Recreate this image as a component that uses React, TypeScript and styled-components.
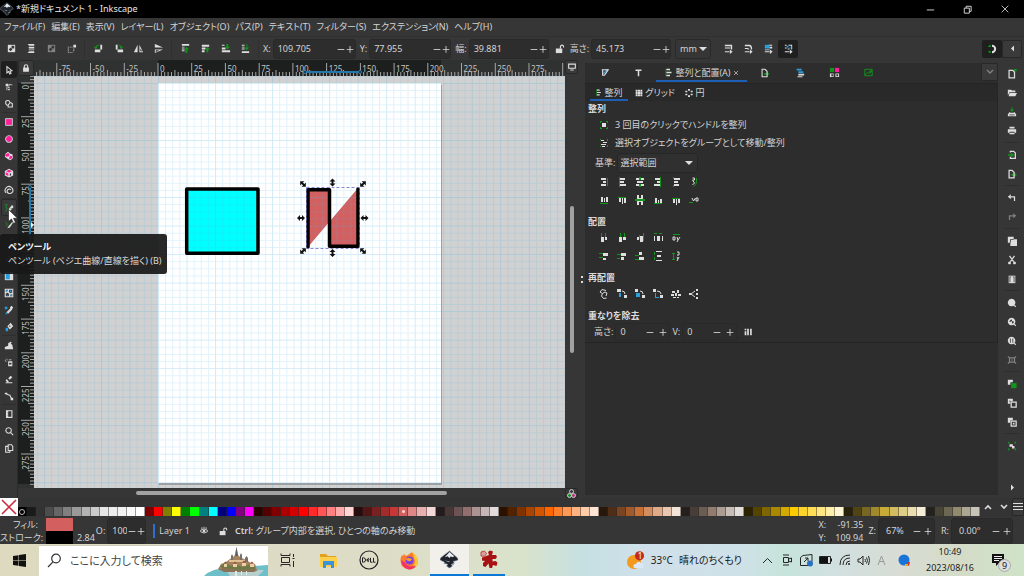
import React from 'react';
import styled, { createGlobalStyle, css } from 'styled-components';

const GlobalStyle = createGlobalStyle`
  * { box-sizing: border-box; }
  html, body { margin: 0; padding: 0; background: #363636; overflow: hidden; }
  body, button, input, select {
    font-family: "Noto Sans", "Noto Sans CJK JP", sans-serif;
    font-feature-settings: "palt";
    font-size: 9px;
    line-height: 14px;
    color: #d4d4d4;
  }
  button, input, select { margin: 0; padding: 0; border: 0; background: none; outline: 0; }
  svg { display: block; flex: none; }
`;

const light = '#dedede';
const green = '#12961a';
const blue = '#2a9fe0';
const pink = '#ff1f9a';

/* ---------- icons: 12x12 glyphs, one path per colour ---------- */

interface Glyph {
  w?: string; // light fill
  s?: string; // light stroke
  g?: string; // green fill
  gs?: string; // green stroke
  b?: string; // blue fill
  p?: string; // pink fill
  k?: string; // dark detail on top
}

const glyphs: Record<string, Glyph> = {
  selectAll: { w: 'M2 2h8v8h-8z', k: 'M6 3h3v3h-3zM3 7l2-2 2 2-2 2z' },
  selectLayers: { w: 'M3 1h6v2h-6zM3 4h6v2h-6zM3 7h6v1h-6zM3 9h6v2h-6zM2 1h1v1h-1zM2 10h1v1h-1z' },
  deselect: { w: 'M2 2h8v8h-8z', k: 'M6 3h3v3h-3zM3 7l2-2 2 2-2 2z' },
  selectTouch: { w: 'M2 4h1v1h-1zM4 4h1v1h-1zM6 4h1v1h-1zM2 6h1v1h-1zM2 8h1v1h-1zM2 10h1v1h-1zM4 10h1v1h-1zM6 10h1v1h-1zM8 6h1v1h-1zM8 8h1v1h-1zM8 2h3v3h-3z' },
  rotateLeft: { w: 'M2 7h6v3h-6zM8 2h2v5h-2z', gs: 'M3 6q0-4 4-4', g: 'M1 4h4l-2 3z' },
  rotateRight: { w: 'M5 7h6v3h-6zM3 2h2v5h-2z', gs: 'M6 2q3 0 3 3', g: 'M7 4h4l-2 3z' },
  flipH: { w: 'M5 2v8h-4zM7 2l4 8h-4z', k: 'M8 6l2 3h-2z' },
  flipV: { w: 'M2 1l9 4h-9zM2 7h9l-9 4z', k: 'M3 8h4l-4 2z' },
  raiseTop: { w: 'M2 1h8v2h-8zM2 4h3v1h-3zM2 6h3v1h-3zM2 8h3v1h-3z', g: 'M7 4l3 3h-2v4h-2v-4h-1z' },
  raise: { w: 'M2 2h8v2h-8zM2 5h4v2h-4zM2 8h3v2h-3z', g: 'M8 4l3 3h-2v3h-2v-3h-1z' },
  lower: { w: 'M2 8h9v2h-9zM2 5h4v2h-4zM2 2h3v1h-3z', g: 'M7 1h2v3h2l-3 3-3-3h2z' },
  lowerBottom: { w: 'M2 9h8v2h-8zM2 2h3v1h-3zM2 4h3v1h-3zM2 6h3v1h-3z', g: 'M7 1h1v4h2l-3 3-2-3h2z' },
  unlock: { w: 'M2 6h7v5h-7z', s: 'M7 6v-2a1.700 1.700 0 0 1 3.400 0v1' },
  lock: { w: 'M2.500 5.500h7v5h-7z', s: 'M4 6v-2a2 2 0 0 1 4 0v2' },
  scaleStroke: { w: 'M2 2h8v1.500h-8zM2 5h6v1h-6zM8.500 2h1.500v5h-1.500zM2 9h5v1h-5zM7.500 7l3 2.500-3 2.500z' },
  scaleCorner: { w: 'M2 2h5q3 0 3 5h-1.500q0-3.500-2-3.500h-4.500zM2 5.500h3q1.500 0 1.500 1.500h-1q0-.5-1-.5h-2.500zM2 9h5v1h-5zM7.500 7l3 2.500-3 2.500z' },
  scaleGradient: { b: 'M2 2h5v4h-5z', w: 'M6 2h4v1h-4zM7 4h3v2h-3zM2 9h5v1h-5zM7.500 7l3 2.500-3 2.500zM2 7h5v1h-5z' },
  scalePattern: { b: 'M4 3h2v2h-2zM7 5h2v1h-2z', w: 'M2 2h2v1h-2zM6 2h4v1h-4zM9 3h1v4h-1zM2 5h2v1h-2zM2 9h5v1h-5zM7.500 7l3 2.500-3 2.500zM5 6h2v1h-2z' },
  snap: { g: 'M1.500 2.500l3-1.500v2.500h-3zM1.500 8.500h3v2.500l-3-1.500z', w: 'M6 1a5 5 0 0 1 0 10v-2.400a2.600 2.600 0 0 0 0-5.200z' },
  arrow: { s: 'M3.500 2v7.500l2-1.500 1.500 2.800 1.500-.8-1.400-2.600 2.400-.6z' },
  nodes: { w: 'M2 2h3v3h-3zM4 5l3 1 0 1-2 0zM5 8h2v2h-2zM8 3h2v1h-2zM3 6h1v4h-1z', s: 'M5 4l3-1' },
  shapeBuilder: { s: 'M2 4.500a2.500 2.500 0 0 1 5-.5l3 1.500v4h-5v-2a3 3 0 0 1-3-3zM5 7l2-2' },
  rectTool: { w: 'M1.500 1.500h9v9h-9z', p: 'M2.500 2.500h7v7h-7z' },
  circleTool: { w: 'M6 1.500a4.500 4.500 0 1 0 .01 0z', p: 'M6 2.500a3.500 3.500 0 1 0 .01 0z' },
  starTool: { w: 'M5 1l2 2 3 1 1 4-3 3-3-1-4-3 1-4z', p: 'M5 2.500l1.500 1.500 0 2-3 1-2-1 1-2.500zM7 6l3 0 0 2-2 2-2-1z' },
  boxTool: { w: 'M6 1l5 2.500v5.500l-5 2.500-5-2.500v-5.500z', p: 'M6 2l3.500 2-3.500 1.500-3.500-1.500zM2 5l3.200 1.500v3l-3.200-1.500z', k: 'M7 7l1.500-.7v2.400l-1.500.8z' },
  spiralTool: { s: 'M2.500 9.500a4.600 4.600 0 1 1 7.400-.6q-1.500 1.600-3.600 1.200a2.600 2.600 0 1 1 2-4.300' },
  penTool: { gs: 'M1 2h3l-2 3 2 1-2 4', w: 'M6 7l3-4 2 0 0 2-3 4-3 1z', k: 'M8 6h1v1h-1z' },
  pencilTool: { gs: 'M2 2q3 3 1 5', w: 'M5 8l5-6 1 1-4 6-3 1z' },
  calligraphy: { gs: 'M2 10l7-7', w: 'M8 2h2v2h-2z' },
  textTool: { w: 'M5 2h2l3 8h-2l-2-6-2 6h-2z' },
  gradientTool: { w: 'M1 1h10v10h-10z', b: 'M2 2h5v8h-5z' },
  meshTool: { s: 'M1.500 1.500h9v9h-9zM2 6q2-2 4 0t4 0M6 2q-2 2 0 4t0 4', b: 'M2.500 2.500h2v2h-2zM7.500 7.500h2v2h-2zM7 3h2v2h-2zM3 8h2v1h-2z' },
  picker: { b: 'M1 2h3v3h-3zM2 9h2v2h-2z', s: 'M4 8.500l4-4 1 1-4 4z', w: 'M7 3l2-2 2 2-2 3z' },
  bucket: { b: 'M2 7h3v4h-3z', w: 'M4 5l4-4 3 4-4 4z', k: 'M7 4l1 1-1 1-1-1z' },
  tweak: { w: 'M1 11v-2.500l4-1.500 0-3 3-2 1.500 1-1.500 1 2 2 1 5z' },
  spray: { w: 'M5 5h5v6h-5zM6 3h3v1h-3zM2 2h1v1h-1zM2 5h1v1h-1zM4 3h1v1h-1zM1 3.500h1v1h-1z', k: 'M6 7h3v2h-3z' },
  eraser: { w: 'M5 5l3-3 2 2-3 3zM3 6l3 3-2 1-2-2zM2 10h8v1h-8z' },
  connector: { w: 'M1 2h3v2h-3zM8 8h3v3h-3z', s: 'M3 4l4 1 2 4' },
  measure: { s: 'M3 2h6.500v8h-6.500z', w: 'M3 2h2v8h-2z', k: 'M3 4h1v1h-1zM3 7h1v1h-1z' },
  zoomTool: { s: 'M5.500 2a3.300 3.300 0 1 0 .01 0zM8 8l3 3' },
  pagesTool: { s: 'M5 2h4l1.500 2v5h-5.500zM5 4h-3v7h5v-2' },
  strokePanel: { s: 'M3 3h7l-4 6h-2v-6', b: 'M5 6l4-4 1 1-4 4-2 1z' },
  textPanel: { w: 'M2 2h8v2h-3v7h-2v-7h-3z' },
  alignPanel: { w: 'M3 1h5v2h-5zM3 5h7v2h-7zM3 9h5v2h-5z', g: 'M2 1h1v10h-1z' },
  exportPanel: { s: 'M2.500 1.500h3.500l2.500 2.500v6.500h-6z', g: 'M5 6h3v-1.500l3.500 2.500-3.500 2.500v-1.500h-3z' },
  layersPanel: { b: 'M2 1h6v2h-6zM4 4h6v2h-6z', w: 'M4 7h7v2h-7zM3 10h6v1h-6z' },
  swatchPanel: { g: 'M1 1h4.500v4.500h-4.500z', p: 'M6.500 1h4.500v4.500h-4.500z', w: 'M1 7h4v4h-4zM7 7h4v4h-4z', k: 'M2.500 8h2v2h-2zM8 8h2v2h-2z' },
  imagePanel: { gs: 'M2 2.500h8v7h-8zM2 9l3-3 2 1 3-4', g: 'M7 4h2v2h-2z' },
  gridDots: { w: 'M1 1h3v3h-3zM4.500 1h3v3h-3zM8 1h3v3h-3zM1 4.500h3v3h-3zM4.500 4.500h3v3h-3zM8 4.500h3v3h-3zM1 8h3v3h-3zM4.500 8h3v3h-3zM8 8h3v3h-3z' },
  ring: { w: 'M4.500 0h3v2.500h-3zM4.500 9.500h3v2.500h-3zM.5 2.500h3v2.500h-3zM8.500 2.500h3v2.500h-3zM.5 7h3v2.500h-3zM8.500 7h3v2.500h-3z' },
  handleClick: { w: 'M4 4h4v4h-4z', g: 'M2 2h2v1h-1v1h-1zM8 2h2v2h-1v-1h-1zM2 8h1v1h1v1h-2zM9 8h1v2h-2v-1h1z' },
  moveGroup: { w: 'M3 3h3v1h-3zM5 5h4v1h-4zM3 7h5v1h-5zM4 9h3v1h-3z', g: 'M9 2h1v2h-1zM9 8h1v2h-1zM2 2h1v1h-1zM2 9h1v1h-1z' },
  aRightToLeft: { w: 'M3 2h5v2h-5zM5 5h3v2h-3zM3 8h5v2h-5z', g: 'M9 2h1v8h-1z' },
  aLeft: { w: 'M4 2h5v2h-5zM4 5h4v2h-4zM4 8h6v2h-6z', g: 'M3 1h1v10h-1z' },
  aCenter: { w: 'M2 2h3v2h-3zM7 2h3v2h-3zM3 5h6v2h-6zM2 8h3v2h-3zM7 8h3v2h-3z', g: 'M5 1h2v3h-2zM5 8h2v3h-2z' },
  aRight: { w: 'M3 2h5v2h-5zM5 5h3v2h-3zM2 8h6v2h-6z', g: 'M8 1h1v10h-1z' },
  aLeftToRight: { w: 'M4 2h6v2h-6zM4 5h4v2h-4zM4 8h5v2h-5z', g: 'M3 1h1v2h-1zM3 9h1v2h-1z' },
  aTextV: { s: 'M4.500 2h2v2h-2l2 3-2 2', gs: 'M8.500 2v4q0 3-3 4.500' },
  vBottomToTop: { w: 'M3 3h2v5h-2zM6 4h1v4h-1zM8 3h2v5h-2z', g: 'M2 9h8v1h-8z' },
  vTop: { w: 'M3 4h2v4h-2zM6 4h1v6h-1zM8 4h2v5h-2z', g: 'M2 3h8v1h-8z' },
  vCenter: { w: 'M3 1h2v4h-2zM7 1h2v4h-2zM3 7h2v4h-2zM7 7h2v4h-2zM5 4h2v4h-2z', g: 'M1 5h10v2h-10z' },
  vBottom: { w: 'M3 4h2v5h-2zM6 6h1v3h-1zM8 5h2v4h-2z', g: 'M2 9h8v1h-8z' },
  vTopToBottom: { w: 'M3 5h2v4h-2zM6 5h1v6h-1zM8 5h2v4h-2z', g: 'M2 4h8v1h-8z' },
  aTextH: { s: 'M4 4l1.500 3 2-3M8 4h2v3h-2z', g: 'M1 8h4v1h-4z' },
  dLeft: { w: 'M3 5h3v5h-3zM7 5h2v3h-2z', g: 'M3 1h1v4h-1zM7 1h1v4h-1z' },
  dCenter: { w: 'M3 5h3v5h-3zM7 5h3v3h-3z', g: 'M4 1h1v4h-1zM8 1h1v4h-1z' },
  dRight: { w: 'M3 5h2v3h-2zM6 4h3v6h-3z', g: 'M5 3h1v4h-1zM9 1h1v8h-1z' },
  dGap: { w: 'M2 4h1v5h-1zM5 4h3v5h-3zM10 4h1v5h-1z', g: 'M2 1h3v1h-3zM7 1h3v1h-3z' },
  dText: { s: 'M3 5h2v3h-2zM7 5l1 3 2-3M8 8l-1 2', g: 'M3 2h7v1h-7z' },
  eTop: { w: 'M5 3h5v3h-5zM5 8h3v2h-3z', g: 'M1 3h4v1h-4zM1 7h4v1h-4z' },
  eCenter: { w: 'M5 3h5v3h-5zM5 7h3v3h-3z', g: 'M1 4h4v1h-4zM1 8h3v1h-3z' },
  eBottom: { w: 'M5 2h3v3h-3zM5 7h5v3h-5z', g: 'M1 5h4v1h-4zM1 9h4v1h-4z' },
  eGap: { w: 'M4 1h6v1h-6zM5 5h4v2h-4zM4 10h6v1h-6z', g: 'M2 2h1v3h-1zM2 7h1v3h-1z' },
  eText: { s: 'M7 2h2v3h-2M7 7l1 2M9 7l-2 4', gs: 'M2 3.500h3M3.500 3.500v6M2 9.500h3' },
  rGraph: { s: 'M8 2.500l-4-1-2 2.500 2.500 1.500 2.500-1.500 2 1-1 3M4.500 5.500l-1 2.500 2 2.500 3-.5' },
  rSwap: { b: 'M3 5h2v4h-2z', w: 'M1 1h4v3h-4zM8 7h3v3h-3z', s: 'M6 3q3 0 3 3' },
  rSwapZ: { b: 'M2 5h4v4h-4z', w: 'M1 1h3v3h-3zM8 7h3v3h-3z', s: 'M6 3q3 0 3 3' },
  rSwapR: { b: 'M3 5h1v4h3v1h-4z', w: 'M1 1h3v3h-3zM8 7h3v3h-3z', s: 'M5 3q4 0 4 3' },
  rScatter: { w: 'M2 3h3v2h-3zM7 2h2v3h-2zM1 6h3v2h-3zM5 5h2v3h-2zM8 6h3v2h-3zM3 9h3v1h-3zM7 9h2v1h-2z' },
  rNodes: { w: 'M1 5h2v2h-2zM8 1h2v2h-2zM8 5h2v2h-2zM8 9h2v2h-2z', s: 'M3 6l4-3M3 6l4 3' },
  overlap: { w: 'M2 5h2v5h-2zM5 2h2v8h-2zM8.500 2h2v8h-2zM2 2h2v2h-2z' },
  docNew: { s: 'M2.500 1.500h4.500l2 2.500v6.500h-6.500z', g: 'M8.500 0h3v3h-3z' },
  docOpen: { w: 'M1 2h4l1 1h4v2h-7l-2 4zM3 6h9l-2 4h-8z' },
  save: { g: 'M5.500 0h1v3h2l-2.500 3-2.500-3h2z', w: 'M3 6l1 1h4l1-1 2 3v2h-10v-2z', k: 'M3 9h6v1h-6z' },
  print: { w: 'M3 1h6v2h-6zM1 4h10v4h-2v-1h-6v1h-2zM3 8h6v2h-6z' },
  importDoc: { s: 'M4 3v-1.500h4l2 2v6.500h-6v-2', g: 'M1 5h4v-2l4 3-4 3v-2h-4z' },
  exportDoc: { s: 'M2.500 1.500h3.500l2.500 2.500v6.500h-6z', g: 'M5 6h4v-1.500l3 2.500-3 2.500v-1.500h-4z' },
  undo: { w: 'M1 4.500l3.500-3v6z', s: 'M4 4.500h5v5' },
  redo: { w: 'M11 4.500l-3.500-3v6z', s: 'M8 4.500h-5v5' },
  copy: { w: 'M1 1h7v7h-7zM4 4h8v8h-8z', k: 'M3.500 4.500h1v3.500h-1zM4 3.500h4v1h-4z' },
  cut: { s: 'M3 1l5 7M9 1l-5 7M3 8.500a1 1 0 1 0 .01 0zM9 8.500a1 1 0 1 0 .01 0z' },
  paste: { w: 'M2 2h8v9h-8z', k: 'M3 3h1v7h-1zM8 3h1v7h-1zM4 3h1v1h-1zM7 3h1v1h-1z' },
  zoomSel: { w: 'M5.500 1a4.500 4.500 0 1 0 .01 0zM8 9l1-1 2 2-1 1z' },
  zoomDraw: { w: 'M5.500 1a4.500 4.500 0 1 0 .01 0zM8 9l1-1 2 2-1 1z', k: 'M3 6a3 3 0 0 1 3-3v2zM6 5l2 0 0 2-2 1z' },
  zoomPage: { w: 'M5.500 1a4.500 4.500 0 1 0 .01 0zM8 9l1-1 2 2-1 1z', k: 'M3.500 3h1v5h-1zM6.500 3h1v5h-1z' },
  zoomCenter: { s: 'M3 3.500h6v5h-6zM1 2l2 1M11 2l-2 1M1 10l2-1M11 10l-2-1', w: 'M5 5.500h2v1h-2z' },
  duplicate: { w: 'M1 1h6v3h-3v3h-3z', g: 'M5 5h6.500v6h-6.500z' },
  clone: { w: 'M1 1h6v3h-3v3h-3z', s: 'M5 5h6v6h-6z', k: 'M3 3h1v2h-1z' },
  unlink: { w: 'M1 1h6v3h-3v3h-3zM7 7h2v2h-2z', s: 'M5 5h6v6h-6z' },
  groupSel: { g: 'M1 1h2v2h-2zM9 1h2v2h-2zM1 9h2v2h-2zM9 9h2v2h-2z', w: 'M3 4h4v3h-4zM6 6h3v3h-3z' },
  triRight: { w: 'M4 2l4 4-4 4z' },
  triLeft: { w: 'M8 2l-4 4 4 4z' },
  display: { s: 'M2 2.500h8v5h-8zM4 9.500h4' },
  eye: { s: 'M2 5q4-3 8 0v2q-4 3-8 0z', w: 'M4.500 4.500h3v3h-3zM3 1.500h1v2h-1zM8 1.500h1v2h-1zM5.500 1h1v2h-1z' },
  chevUp: { s: 'M3 8l3-3 3 3' },
  chevDown: { s: 'M3 4l3 3 3-3' },
  burger: { w: 'M1 2h10v1h-10zM1 5h10v1h-10zM1 8h10v1h-10z' },
  minus: { w: 'M2 6h8v1h-8z' },
  plus: { w: 'M2 6h8v1h-8zM5.500 2.500h1v8h-1z' },
  minimise: { w: 'M2 6h8v1h-8z' },
  restore: { s: 'M2.500 4.500h5.500v5.500h-5.500zM4.500 4.500v-2h5.500v5.500h-2' },
  close: { s: 'M2 2l8 8M10 2l-8 8' },
};

const Svg = styled.svg<{ $dim?: boolean }>`
  opacity: ${(p) => (p.$dim ? 0.45 : 1)};
`;

function Icon({ name, size = 12, dim, weight = 1.3 }: { name: string; size?: number; dim?: boolean; weight?: number }) {
  const g = glyphs[name];
  return (
    <Svg $dim={dim} width={size} height={size} viewBox="0 0 12 12" fill="none" aria-hidden="true">
      {g.w && <path d={g.w} fill={light} />}
      {g.g && <path d={g.g} fill={green} />}
      {g.b && <path d={g.b} fill={blue} />}
      {g.p && <path d={g.p} fill={pink} />}
      {g.k && <path d={g.k} fill="#3a3a3a" />}
      {g.gs && <path d={g.gs} stroke={green} />}
      {g.s && <path d={g.s} stroke={light} strokeWidth={weight} />}
    </Svg>
  );
}

/* ---------- shared controls ---------- */

const IconButton = styled.button<{ $w?: number; $h?: number; $on?: boolean; $hover?: boolean }>`
  width: ${(p) => p.$w ?? 20}px;
  height: ${(p) => p.$h ?? 18}px;
  flex: none;
  display: flex;
  align-items: center;
  justify-content: center;
  border-radius: 2px;
  ${(p) => p.$on && css`background: #1f1f1f;`}
  ${(p) => p.$hover && css`background: #3a3a3a; border: 1px solid #282828;`}
`;

const Entry = styled.span<{ $w: number; $h: number }>`
  display: flex;
  align-items: center;
  width: ${(p) => p.$w}px;
  height: ${(p) => p.$h}px;
  background: #2d2d2d;
  border: 1px solid #292929;
  border-radius: 3px;
`;

const EntryInput = styled.input<{ $indent: number }>`
  flex: 1;
  min-width: 0;
  padding-left: ${(p) => p.$indent}px;
`;

const Field = styled.label`
  display: flex;
  align-items: center;
  gap: 2px;
  white-space: nowrap;
`;

function Spin({ label, value, width, height = 20, step = 9, indent = 4, dimPlus }: {
  label: string; value: string; width: number; height?: number; step?: number; indent?: number; dimPlus?: boolean;
}) {
  return (
    <Field>
      {label}
      <Entry $w={width} $h={height}>
        <EntryInput $indent={indent} defaultValue={value} />
        <IconButton $w={step} $h={14} aria-label="decrease"><Icon name="minus" size={10} /></IconButton>
        <IconButton $w={step} $h={14} aria-label="increase"><Icon name="plus" size={10} dim={dimPlus} /></IconButton>
      </Entry>
    </Field>
  );
}

/* ---------- window frame ---------- */

const Window = styled.div`
  position: relative;
  display: flex;
  flex-direction: column;
  height: 100vh;
  background: #363636;
`;

const TitleBar = styled.header`
  display: flex;
  align-items: center;
  height: 18px;
  flex: none;
  gap: 2px;
  padding-right: 2px;
  background: #000;
  color: #e6e6e6;
`;

const TitleText = styled.h1`
  flex: 1;
  margin: 0;
  font-size: 9px;
  font-weight: 400;
`;

const MenuBar = styled.nav`
  display: flex;
  align-items: center;
  height: 19px;
  flex: none;
  padding-left: 4px;
  gap: 6px;
  border-bottom: 1px solid #303030;
  button { white-space: nowrap; }
`;

const ToolBar = styled.div`
  display: flex;
  align-items: center;
  height: 23px;
  flex: none;
  padding: 0 2px 0 1px;
`;

const Divider = styled.i`
  width: 1px;
  height: 18px;
  margin: 0 3px;
  background: #303030;
`;

const Fields = styled.div`
  display: flex;
  align-items: center;
  gap: 4px;
  margin: 0 7px 0 1px;
`;

const UnitSelect = styled.span`
  display: flex;
  align-items: center;
  border: 1px solid #292929;
  border-radius: 3px;
  height: 20px;
  width: 36px;
  padding: 0 3px 0 4px;
  select { appearance: none; flex: 1; min-width: 0; }
`;

const Caret = styled.i`
  border: 4px solid transparent;
  border-top-color: ${light};
  border-bottom-width: 0;
  flex: none;
`;

const Spacer = styled.span`
  flex: 1;
`;

function InkscapeMark({ size }: { size: number }) {
  return (
    <svg width={size} height={size} viewBox="0 0 20 20" aria-hidden="true">
      <path d="M10 1l8 7q2 2 0 3l-4 1 1 2-3 1 1 2-3 2-3-2 1-2-4-1 1-1-4-2q-2-1 0-3z" fill="#20242a" stroke="#8aa0b8" strokeWidth=".6" />
      <path d="M10 2l5 4.500-2 1-1.500-1-1.500 2-2-2-3 1z" fill="#e8eef4" />
      <path d="M5 11l6 1-2 1zM12 15l3-.5-1 1.500z" fill="#99a" />
    </svg>
  );
}

/* ---------- canvas ---------- */

const Main = styled.main`
  flex: 1;
  min-height: 0;
  display: grid;
  grid-template-columns: 18px minmax(0, 1fr) 7px 413px 26px;
`;

const ToolStrip = styled.div`
  display: flex;
  flex-direction: column;
  align-items: center;
  padding-top: 1px;
  border-right: 1px solid #2b2b2b;
`;

const ToolRule = styled.hr<{ $gap?: number }>`
  width: 14px;
  height: 1px;
  margin: ${(p) => p.$gap ?? 0}px 0;
  border: 0;
  background: #2d2d2d;
`;

const CanvasArea = styled.section`
  display: grid;
  grid-template-columns: 16px minmax(0, 1fr) 13px;
  grid-template-rows: 16px minmax(0, 1fr) 10px;
  min-height: 0;
`;

const Surface = styled.svg`
  width: 100%;
  height: 100%;
  overflow: hidden;
  font-size: 8px;
`;

const ScrollV = styled.div`
  display: flex;
  flex-direction: column;
  align-items: center;
  &::before { content: ""; flex: 130; }
  &::after { content: ""; flex: 135; }
`;

const ScrollH = styled.div`
  display: flex;
  align-items: center;
  &::before { content: ""; flex: 102; }
  &::after { content: ""; flex: 118; }
`;

const Thumb = styled.i<{ $vertical?: boolean }>`
  ${(p) => (p.$vertical ? css`width: 4px; flex: 147;` : css`height: 4px; flex: 311;`)}
  border-radius: 2px;
  background: #a2a2a2;
`;

const UNIT = 1.349;
const tickLength = (i: number) => (i % 10 === 0 ? 13 : i % 5 === 0 ? 6 : 4);
const range = (from: number, to: number) => Array.from({ length: to - from + 1 }, (_, k) => from + k);

function HRuler() {
  const at = (i: number) => 124 + i * 2.5 * UNIT;
  return (
    <Surface role="img" aria-label="Horizontal ruler">
      <rect width="100%" height="100%" fill="#303131" />
      <rect x={124} width={283} height="16" fill="#1d1f1f" />
      {range(-36, 120).map((i) => <path key={i} d={`M${at(i).toFixed(1)} 16v-${tickLength(i)}`} stroke="#a6a6a6" />)}
      {range(-3, 11).map((n) => <text key={n} x={at(n * 10) + 2} y={12} fill="#c4c4c4">{n * 25}</text>)}
      <path d="M271 12h55" stroke="#2278ab" strokeWidth="2" />
      <g fill="#1d1f1f" stroke="#2a86bf"><circle cx="271" cy="12" r="1.500" /><circle cx="326" cy="12" r="1.500" /></g>
    </Surface>
  );
}

function VRuler() {
  const at = (i: number) => 7 + i * 2.5 * UNIT;
  return (
    <Surface role="img" aria-label="Vertical ruler">
      <rect width="100%" height="100%" fill="#303131" />
      <rect y="7" width="16" height="401" fill="#1d1f1f" />
      {range(-2, 119).map((i) => <path key={i} d={`M16 ${at(i).toFixed(1)}h-${tickLength(i)}`} stroke="#a6a6a6" />)}
      {range(0, 11).map((n) => (
        <text key={n} x="11" y={at(n * 10) + 2} fill="#c4c4c4" transform={`rotate(-90 11 ${at(n * 10) + 2})`} textAnchor="end">{n * 25}</text>
      ))}
      <path d="M12 111v61" stroke="#2278ab" strokeWidth="2" />
      <circle cx="12" cy="111" r="1.500" fill="#1d1f1f" stroke="#2a86bf" />
      <path d="M16 149l-3-3v6z" fill="#eee" />
    </Surface>
  );
}

const handle = 'M-4 0l3-3v2h2v-2l3 3-3 3v-2h-2v2z';
const handles: [number, number, number][] = [
  [145, 101, 45], [205, 101, -45], [145, 168, -45], [205, 168, 45],
  [174.5, 99.500, 90], [174.5, 170, 90], [143, 135, 0], [206.500, 135, 0],
];

function Drawing() {
  return (
    <Surface role="img" aria-label="Drawing">
      <defs>
        <pattern id="minor" width="7.130" height="7.130" patternUnits="userSpaceOnUse" x="124" y="7">
          <path d="M0 .5h7.130M.5 0v7.130" stroke="#4bb0e8" strokeOpacity=".17" />
        </pattern>
        <pattern id="major" width="28.520" height="28.520" patternUnits="userSpaceOnUse" x="124" y="7">
          <path d="M0 .5h28.520M.5 0v28.520" stroke="#4bb0e8" strokeOpacity=".1" />
        </pattern>
      </defs>
      <rect width="100%" height="100%" fill="#d1d1d1" />
      <g transform="translate(124 7)">
        <rect x="1" y="2" width="283" height="400" fill="#8c8c8c" opacity=".7" />
        <rect width="283" height="400" fill="#fff" />
        <rect x="28.700" y="106" width="71.300" height="64.300" fill="#0ff" />
        <path d="M150 164V106.700H171.500V163.300H200V105z" fill="#d35f5f" fillRule="evenodd" />
      </g>
      <rect width="100%" height="100%" fill="url(#minor)" />
      <rect width="100%" height="100%" fill="url(#major)" />
      <g transform="translate(124 7)" fill="none">
        <rect x="28.700" y="106" width="71.300" height="64.300" stroke="#000" strokeWidth="3.500" strokeLinejoin="round" />
        <path d="M150 164V106.700H171.500V163.300H200V106" stroke="#000" strokeWidth="3.500" strokeLinejoin="round" strokeLinecap="round" />
        <rect x="148.500" y="104.500" width="53" height="61" stroke="#6b6bc8" strokeDasharray="3 2" strokeWidth=".8" />
        {handles.map(([x, y, r], i) => (
          <path key={i} d={handle} fill="#111" transform={`translate(${x} ${y}) rotate(${r})`} />
        ))}
      </g>
    </Surface>
  );
}

const Grip = styled.span`
  align-self: center;
  justify-self: center;
  width: 2px;
  border-left: 2px dotted #ddd;
  height: 7px;
`;

/* ---------- dialog dock ---------- */

const Dock = styled.aside`
  display: flex;
  flex-direction: column;
  margin: 3px 0;
  background: #2d2d2d;
`;

const Tabs = styled.div`
  display: flex;
  height: 21px;
  flex: none;
  padding: 0 0 1px 2px;
  border-bottom: 1px solid #252525;
`;

const Tab = styled.button<{ $w: number; $active?: boolean }>`
  width: ${(p) => p.$w}px;
  display: flex;
  align-items: center;
  justify-content: center;
  gap: 2px;
  white-space: nowrap;
  border-top: 2px solid transparent;
  border-bottom: 2px solid ${(p) => (p.$active ? '#1c5fb4' : 'transparent')};
`;

const SubTabs = styled.div`
  display: flex;
  height: 17px;
  padding-left: 5px;
  gap: 6px;
  background: #292929;
`;

const DockBody = styled.div`
  border-bottom: 1px solid #242424;
  border-right: 1px solid #262626;
  padding-bottom: 1px;
`;

const Heading = styled.h2<{ $first?: boolean }>`
  margin: ${(p) => (p.$first ? 0 : 5)}px 0 0 3px;
  height: 15px;
  font-size: 9px;
  line-height: 15px;
  font-weight: 700;
  color: #dcdcdc;
`;

const Row = styled.div<{ $h?: number; $pad?: number; $gap?: number }>`
  display: flex;
  align-items: center;
  height: ${(p) => p.$h ?? 18}px;
  padding-left: ${(p) => p.$pad ?? 10}px;
  gap: ${(p) => p.$gap ?? 0}px;
`;

const ToggleRow = styled.button`
  display: flex;
  align-items: center;
  height: 18px;
  padding-left: 13px;
  gap: 5px;
  white-space: nowrap;
`;

const SelectBox = styled.span`
  display: flex;
  align-items: center;
  width: 81px;
  height: 20px;
  padding: 0 4px 0 2px;
  background: #303030;
  border: 1px solid #262626;
  border-radius: 3px;
  select { appearance: none; flex: 1; min-width: 0; }
`;

const CommandStrip = styled.div`
  display: flex;
  flex-direction: column;
  align-items: center;
  padding: 4px 0 2px 2px;
`;

/* ---------- palette and status ---------- */

const PaletteBar = styled.div`
  display: flex;
  align-items: flex-end;
  height: 19px;
  flex: none;
  padding-bottom: 1px;
  background: #343434;
`;

const NoneSwatch = styled.button`
  width: 18px;
  height: 18px;
  background: #fff;
`;

const Swatches = styled.div`
  flex: 1;
  display: flex;
  height: 9px;
`;

const Swatch = styled.button<{ $c: string }>`
  flex: 1;
  min-width: 0;
  background: ${(p) => p.$c};
  border-right: 1px solid rgba(40, 40, 40, 0.45);
  display: flex;
  align-items: center;
  justify-content: center;
`;

const Dot = styled.i<{ $ring?: boolean }>`
  width: ${(p) => (p.$ring ? 6 : 3)}px;
  height: ${(p) => (p.$ring ? 6 : 3)}px;
  border-radius: 50%;
  ${(p) => (p.$ring ? css`border: 1px solid #bbb;` : css`background: #f3dada;`)}
`;

const PaletteButtons = styled.div`
  display: flex;
  width: 44px;
  height: 18px;
`;

const StatusBar = styled.div`
  display: flex;
  align-items: center;
  height: 27px;
  flex: none;
  padding-right: 11px;
`;

const Pair = styled.div<{ $w: number; $right?: boolean }>`
  width: ${(p) => p.$w}px;
  display: flex;
  flex-direction: column;
  line-height: 13px;
  text-align: ${(p) => (p.$right ? 'right' : 'left')};
  white-space: nowrap;
  div { display: flex; justify-content: space-between; }
`;

const Paint = styled.button<{ $c: string }>`
  width: 27px;
  height: 13px;
  background: ${(p) => p.$c};
`;

const PaintStack = styled.div`
  display: flex;
  flex-direction: column;
  margin: 0 4px 0 8px;
`;

const StrokeWidth = styled.span`
  align-self: flex-end;
  line-height: 13px;
  margin-right: 1px;
`;

const Layer = styled.button`
  margin-left: 7px;
  padding-left: 4px;
  border-left: 2px solid #2f6fd0;
  white-space: nowrap;
`;

const Hint = styled.p`
  flex: 1;
  min-width: 0;
  margin: 0 0 0 7px;
  white-space: nowrap;
  b { font-weight: 600; }
`;

const StatusFields = styled.div`
  display: flex;
  gap: 6px;
  margin-left: 5px;
`;

const palette = (
  '000000 1a1a1a 333333 4d4d4d 666666 808080 999999 b3b3b3 cccccc e6e6e6 ececec f2f2f2 f9f9f9 ffffff ' +
  '800000 ff0000 808000 ffff00 008000 00ff00 008080 00ffff 000080 0000ff 800080 ff00ff ' +
  '2b0000 550000 800000 aa0000 d40000 ff0000 ff2a2a ff5555 ff8080 ffaaaa ffd5d5 ' +
  '280b0b 501616 782121 a02c2c c83737 d35f5f de8787 e9afaf f4d7d7 ' +
  '241c1c 483737 6c5353 916f6f ac9393 c8b7b7 e3dbdb ' +
  '2b1100 552200 803300 aa4400 d45500 ff6600 ff7f2a ff9955 ffb380 ffccaa ffe6d5 ' +
  '28170b 502d16 784421 a05a2c c87137 d38d5f deaa87 e9c6af f4e3d7 ' +
  '241f1c 483e37 6c5d53 917c6f ac9d93 c8beb7 e3dedb ' +
  '2b2200 554400 806600 aa8800 d4aa00 ffcc00 ffd42a ffdd55 ffe680 ffeeaa fff6d5 ' +
  '28220b 504416 786721 a0892c c8ab37 d3bc5f decd87 e9ddaf f4eed7 ' +
  '24221c 484537 6c6753 918a6f aca793 c8c4b7'
).split(' ');

/* ---------- desktop taskbar ---------- */

const TaskBar = styled.footer`
  display: flex;
  align-items: center;
  height: 32px;
  flex: none;
  color: #1c1c1c;
  background: linear-gradient(90deg, #dddabf 0%, #dedbc6 30%, #dcdfc8 44%, #d9e3cc 51%, #c6e0e2 57%, #d0e0ea 63%, #cfe1e8 72%, #c6e4da 77%, #d0e0e0 81%, #d8dcd4 88%, #d4dcc8 94%, #cfe3c8 100%);
`;

const TaskButton = styled.button<{ $w: number; $active?: boolean; $running?: boolean }>`
  width: ${(p) => p.$w}px;
  height: 32px;
  flex: none;
  display: flex;
  align-items: center;
  justify-content: center;
  ${(p) => p.$active && css`background: #f1f0ea;`}
  ${(p) => (p.$active || p.$running) && css`border-bottom: 2px solid #0a78d4;`}
`;

const Search = styled.label`
  display: flex;
  align-items: center;
  width: 229px;
  height: 31px;
  padding-left: 8px;
  background: #fff;
  border-top: 1px solid #cfcdbd;
  input {
    flex: 1;
    min-width: 0;
    height: 20px;
    padding-left: 8px;
    font-size: 11px;
    line-height: 18px;
    &::placeholder { color: #444; opacity: 1; }
  }
`;

const Weather = styled.button`
  display: flex;
  align-items: center;
  gap: 6px;
  color: #1c1c1c;
  white-space: nowrap;
  font-size: 10px;
`;

const Tray = styled.div`
  display: flex;
  align-items: center;
  margin-left: 15px;
`;

const Clock = styled.time`
  width: 56px;
  margin-left: 4px;
  line-height: 16px;
  display: flex;
  flex-direction: column;
  align-items: center;
`;

const Notices = styled.button`
  position: relative;
  display: flex;
  align-items: center;
  justify-content: center;
  width: 30px;
  height: 28px;
  margin: 0 11px 0 5px;
`;

const Badge = styled.span`
  position: absolute;
  right: 2px;
  bottom: 2px;
  width: 13px;
  height: 13px;
  border-radius: 50%;
  background: #dedede;
  border: 1px solid #aaa;
  color: #222;
  line-height: 11px;
  text-align: center;
`;

function Castle() {
  return (
    <svg width="64" height="31" viewBox="0 0 64 31" aria-hidden="true">
      <path d="M0 31Q8 23 24 23L64 20V31z" fill="#6fbfcb" />
      <path d="M22 25h38l-6 6H26z" fill="#b9cfce" />
      <path d="M14 24l3-5 5-2 4-3 3-2 2-2 1.500-8 1.500 8 2 2 2 1 4 2 5 3 4 1 2 5-3 2-20 1z" fill="#a5825f" />
      <path d="M31 11l1.500-9 1.500 9z" fill="#59616e" />
      <path d="M27 15v-4l1-2 1 2v4zM36 15v-5l1-2 1 2v5zM41 17v-4l1.500-2 1.500 2v4z" fill="#77706c" />
      <path d="M25 15h16v2h-16z" fill="#e2c095" />
      <path d="M16 21l5-3 6 3 4-2 8 3 7-3 6 4-2 2H20z" fill="#6d7a45" />
      <path d="M20 19h3v3h-3zM29 19h4v3h-4zM38 18h4v3h-4zM46 19h4v3h-4z" fill="#edcfa6" />
      <path d="M20 18l1.500-1.500 1.500 1.500zM29 18.500l2-2 2 2zM38 17.500l2-2 2 2zM46 18.500l2-2 2 2z" fill="#9a4f36" />
      <path d="M14 24l8-1 14 2 12-1 6 1-4 2H20z" fill="#8a7256" />
      <path d="M31 26h2v5h-2zM37 26h1v4h-1zM42 26h1v4h-1z" fill="#dfe9e8" />
    </svg>
  );
}

const gray = '#262626';

const Tip = styled.div`
  position: absolute;
  left: 0;
  top: 234px;
  padding: 6px 5px 6px 8px;
  border-radius: 3px;
  background: rgba(24, 24, 24, 0.93);
  color: #dadada;
  white-space: nowrap;
  b { display: block; font-weight: 600; color: #f2f2f2; }
`;

const Pointer = styled.svg`
  position: absolute;
  left: 8px;
  top: 209px;
`;

const menus = ['ファイル(F)', '編集(E)', '表示(V)', 'レイヤー(L)', 'オブジェクト(O)', 'パス(P)', 'テキスト(T)', 'フィルター(S)', 'エクステンション(N)', 'ヘルプ(H)'];
const barGroups = [
  ['selectAll', 'selectLayers', 'deselect', 'selectTouch'],
  ['rotateLeft', 'rotateRight', 'flipH', 'flipV'],
  ['raiseTop', 'raise', 'lower', 'lowerBottom'],
];
const toolGroups = [
  ['arrow', 'nodes', 'shapeBuilder'],
  ['rectTool', 'circleTool', 'starTool', 'boxTool', 'spiralTool'],
  ['penTool', 'pencilTool', 'calligraphy', 'textTool', 'gradientTool', 'meshTool', 'picker', 'bucket'],
  ['tweak', 'spray', 'eraser', 'connector'],
  ['measure', 'zoomTool', 'pagesTool'],
];
const commandGroups = [
  ['docNew', 'docOpen', 'save', 'print'],
  ['importDoc', 'exportDoc'],
  ['undo', 'redo'],
  ['copy', 'cut', 'paste'],
  ['zoomSel', 'zoomDraw', 'zoomPage', 'zoomCenter'],
  ['duplicate', 'clone', 'unlink'],
  ['groupSel'],
];
const dimmed = new Set(['deselect', 'redo', 'zoomCenter', 'textTool']);

function IconRow({ names }: { names: string[] }) {
  return (
    <Row>
      {names.map((n) => (
        <IconButton key={n} $w={18} aria-label={n}><Icon name={n} weight={1} /></IconButton>
      ))}
    </Row>
  );
}

export default function App() {
  return (
    <Window>
      <GlobalStyle />
      <TitleBar>
        <InkscapeMark size={14} />
        <TitleText>*新規ドキュメント 1 - Inkscape</TitleText>
        <IconButton $w={35} aria-label="minimise"><Icon name="minimise" size={11} /></IconButton>
        <IconButton $w={35} aria-label="restore"><Icon name="restore" size={11} weight={1} /></IconButton>
        <IconButton $w={35} aria-label="close"><Icon name="close" size={10} weight={1} /></IconButton>
      </TitleBar>

      <MenuBar>{menus.map((m) => <button key={m}>{m}</button>)}</MenuBar>

      <ToolBar>
        {barGroups.map((group, i) => (
          <React.Fragment key={i}>
            {group.map((n) => <IconButton key={n} aria-label={n}><Icon name={n} size={11} dim={dimmed.has(n)} /></IconButton>)}
            <Divider />
          </React.Fragment>
        ))}
        <Fields>
          <Spin label="X:" value="109.705" width={83} />
          <Spin label="Y:" value="77.955" width={82} />
          <Spin label="幅:" value="39.881" width={80} />
          <IconButton $w={13} aria-label="lock ratio"><Icon name="unlock" size={11} /></IconButton>
          <Spin label="高さ:" value="45.173" width={80} />
          <UnitSelect>
            <select aria-label="unit"><option>mm</option></select>
            <Caret />
          </UnitSelect>
        </Fields>
        <IconButton aria-label="scale stroke"><Icon name="scaleStroke" size={11} /></IconButton>
        <IconButton aria-label="scale corners"><Icon name="scaleCorner" size={11} /></IconButton>
        <IconButton aria-label="move gradients"><Icon name="scaleGradient" size={11} /></IconButton>
        <IconButton $on aria-label="move patterns"><Icon name="scalePattern" size={11} /></IconButton>
        <Spacer />
        <IconButton $on aria-label="snap"><Icon name="snap" size={10} /></IconButton>
        <IconButton $hover aria-label="snap options"><Icon name="triLeft" size={9} /></IconButton>
      </ToolBar>

      <Main>
        <ToolStrip>
          {toolGroups.map((group, i) => (
            <React.Fragment key={i}>
              {i > 0 && <ToolRule />}
              {group.map((n) => (
                <IconButton key={n} $w={16} $h={17} $on={n === 'arrow'} $hover={n === 'penTool'} aria-label={n}>
                  <Icon name={n} size={10} dim={dimmed.has(n)} />
                </IconButton>
              ))}
            </React.Fragment>
          ))}
        </ToolStrip>

        <CanvasArea>
          <IconButton $w={16} $h={16} $hover aria-label="lock guides"><Icon name="lock" size={10} /></IconButton>
          <HRuler />
          <IconButton $w={13} $h={14} $hover aria-label="display mode"><Icon name="display" size={10} /></IconButton>
          <VRuler />
          <Drawing />
          <ScrollV><Thumb $vertical /></ScrollV>
          <span />
          <ScrollH><Thumb /></ScrollH>
          <IconButton $w={13} $h={10} $hover aria-label="colour management">
            <svg width="9" height="9" viewBox="0 0 9 9" fill="none" stroke="#ccc" aria-hidden="true">
              <circle cx="4.500" cy="2.500" r="2" /><circle cx="2.500" cy="6.500" r="2" fill={green} /><circle cx="6.500" cy="6.500" r="2" fill="#c0308a" />
            </svg>
          </IconButton>
        </CanvasArea>

        <Grip />

        <Dock>
          <Tabs role="tablist">
            <Tab $w={34} aria-label="stroke"><Icon name="strokePanel" size={11} /></Tab>
            <Tab $w={35} aria-label="text"><Icon name="textPanel" size={9} /></Tab>
            <Tab $w={91} $active><Icon name="alignPanel" size={9} />整列と配置(A)<Icon name="close" size={6} /></Tab>
            <Tab $w={36} aria-label="export"><Icon name="exportPanel" size={10} /></Tab>
            <Tab $w={34} aria-label="layers"><Icon name="layersPanel" size={10} /></Tab>
            <Tab $w={34} aria-label="swatches"><Icon name="swatchPanel" size={11} /></Tab>
            <Tab $w={34} aria-label="image"><Icon name="imagePanel" size={11} /></Tab>
            <Spacer />
            <IconButton $w={17} $hover aria-label="more"><Icon name="chevDown" size={12} dim /></IconButton>
          </Tabs>
          <DockBody>
            <SubTabs role="tablist">
              <Tab $w={38} $active><Icon name="alignPanel" size={7} />整列</Tab>
              <Tab $w={42}><Icon name="gridDots" size={8} />グリッド</Tab>
              <Tab $w={26}><Icon name="ring" size={8} />円</Tab>
            </SubTabs>
            <Heading $first>整列</Heading>
            <ToggleRow><Icon name="handleClick" />3 回目のクリックでハンドルを整列</ToggleRow>
            <ToggleRow><Icon name="moveGroup" />選択オブジェクトをグループとして移動/整列</ToggleRow>
            <Row as="label" $h={21} $pad={10} $gap={2}>
              基準:
              <SelectBox>
                <select><option>選択範囲</option></select>
                <Caret />
              </SelectBox>
            </Row>
            <IconRow names={['aRightToLeft', 'aLeft', 'aCenter', 'aRight', 'aLeftToRight', 'aTextV']} />
            <IconRow names={['vBottomToTop', 'vTop', 'vCenter', 'vBottom', 'vTopToBottom', 'aTextH']} />
            <Heading>配置</Heading>
            <IconRow names={['dLeft', 'dCenter', 'dRight', 'dGap', 'dText']} />
            <IconRow names={['eTop', 'eCenter', 'eBottom', 'eGap', 'eText']} />
            <Heading>再配置</Heading>
            <IconRow names={['rGraph', 'rSwap', 'rSwapZ', 'rSwapR', 'rScatter', 'rNodes']} />
            <Heading>重なりを除去</Heading>
            <Row $pad={9} $gap={2}>
              <Spin label="高さ:" value="0" width={55} height={18} step={13} />
              <Spin label="V:" value="0" width={55} height={18} step={13} />
              <IconButton $w={18} aria-label="remove overlaps"><Icon name="overlap" size={10} /></IconButton>
            </Row>
          </DockBody>
        </Dock>

        <CommandStrip>
          {commandGroups.map((group, i) => (
            <React.Fragment key={i}>
              {i > 0 && <ToolRule $gap={2} />}
              {group.map((n) => (
                <IconButton key={n} $h={19} aria-label={n}><Icon name={n} size={10} dim={dimmed.has(n)} weight={1.5} /></IconButton>
              ))}
            </React.Fragment>
          ))}
          <Spacer />
          <IconButton aria-label="more commands"><Icon name="triRight" size={9} /></IconButton>
        </CommandStrip>
      </Main>

      <PaletteBar>
        <NoneSwatch aria-label="no paint">
          <svg width="18" height="18" viewBox="0 0 18 18" aria-hidden="true"><path d="M2 2l14 14M16 2L2 16" stroke="#c8283c" strokeWidth="1.500" /></svg>
        </NoneSwatch>
        <Swatches>
          {palette.map((c, i) => (
            <Swatch key={i} $c={`#${c}`} aria-label={`#${c}`}>
              {i === 0 && <Dot $ring />}
              {c === 'd35f5f' && <Dot />}
            </Swatch>
          ))}
        </Swatches>
        <PaletteButtons>
          <IconButton $w={16} aria-label="previous colours"><Icon name="chevUp" weight={1.6} /></IconButton>
          <IconButton $w={16} aria-label="next colours"><Icon name="chevDown" weight={1.6} /></IconButton>
          <IconButton $w={12} $hover aria-label="palette menu"><Icon name="burger" size={12} /></IconButton>
        </PaletteButtons>
      </PaletteBar>

      <StatusBar>
        <Pair $w={38} $right><span>フィル:</span><span>ストローク:</span></Pair>
        <PaintStack>
          <Paint $c="#d35f5f" aria-label="fill" />
          <Paint $c="#000" aria-label="stroke" />
        </PaintStack>
        <StrokeWidth>2.84</StrokeWidth>
        <Spin label="O:" value="100" width={39} height={26} />
        <Layer>Layer 1</Layer>
        <IconButton $w={28} aria-label="visibility"><Icon name="eye" size={10} weight={1} /></IconButton>
        <IconButton $w={10} aria-label="lock layer"><Icon name="unlock" size={10} /></IconButton>
        <Hint><b>Ctrl:</b> グループ内部を選択, ひとつの軸のみ移動</Hint>
        <Pair $w={45}>
          <div><span>X:</span><span>-91.35</span></div>
          <div><span>Y:</span><span>109.94</span></div>
        </Pair>
        <StatusFields>
          <Spin label="Z:" value="67%" width={57} height={26} step={11} indent={7} />
          <Spin label="R:" value="0.00°" width={62} height={26} step={11} indent={7} />
        </StatusFields>
      </StatusBar>

      <TaskBar>
        <TaskButton $w={39} aria-label="start">
          <svg width="13" height="13" viewBox="0 0 13 13" aria-hidden="true"><path d="M0 2l5.500-.8v5H0zM6 1.100L13 0v6.200H6zM0 6.800h5.500v5L0 11zM6 6.800h7V13l-7-1z" fill="#111" /></svg>
        </TaskButton>
        <Search>
          <svg width="15" height="15" viewBox="0 0 15 15" fill="none" stroke="#333" strokeWidth="1.200" aria-hidden="true"><circle cx="9" cy="5.500" r="4.300" /><path d="M6 8.800L1 14" /></svg>
          <input placeholder="ここに入力して検索" aria-label="検索" />
          <Castle />
        </Search>
        <TaskButton $w={39} aria-label="task view">
          <svg width="15" height="14" viewBox="0 0 15 14" fill="none" stroke={gray} aria-hidden="true"><path d="M1 .5v2h9v-2M1 13.500v-2h9v2M1.500 4.500h8v5h-8zM13.500 1v3M13.500 8v6M12.500 5.500h2" /></svg>
        </TaskButton>
        <TaskButton $w={43} aria-label="files">
          <svg width="17" height="15" viewBox="0 0 17 15" aria-hidden="true"><path d="M0 1h6l2 2h8v3H0z" fill="#e0a21a" /><path d="M0 4h17v10H0z" fill="#fccf4c" /><path d="M3 8h11v7h-3v-3H6v3H3z" fill="#3a94dd" /></svg>
        </TaskButton>
        <TaskButton $w={38} aria-label="Dell">
          <svg width="20" height="20" viewBox="0 0 20 20" fill="none" stroke="#222" aria-hidden="true">
            <circle cx="10" cy="10" r="9" strokeWidth="1.200" />
            <path d="M3.500 7.800v4.400h1q2 0 2-2.200t-2-2.200zM9.800 8.200L7.500 10l2.300 1.800M8 10l2-1.500M8.500 11l2-1.500M11.500 7.800v4.400h2M14.500 7.800v4.400h2" />
          </svg>
        </TaskButton>
        <TaskButton $w={42} aria-label="Firefox">
          <svg width="19" height="19" viewBox="0 0 19 19" aria-hidden="true">
            <path d="M2 4l1 1 1-2 2 2q5-3 6-4 1 2 3 3 3 3 3 7-1 7-8.500 7.500Q1 18 .5 10 .5 6 2 4z" fill="#ff7a2a" />
            <path d="M12 1q6 4 6 10-1 7-8 7 5-3 5-8-1-5-3-9z" fill="#ffc832" />
            <path d="M1 9q1 8 8 9.500 5 0 7-4-8 3-11-3z" fill="#f2316c" />
            <circle cx="9.500" cy="9.500" r="4" fill="#7a3fe0" /><path d="M5 8q3-2 7 0-1 3-4 2z" fill="#ff9a2a" />
          </svg>
        </TaskButton>
        <TaskButton $w={39} $active aria-label="Inkscape"><InkscapeMark size={19} /></TaskButton>
        <TaskButton $w={4} as="span" />
        <TaskButton $w={32} $running aria-label="puzzle">
          <svg width="19" height="19" viewBox="0 0 19 19" aria-hidden="true">
            <path d="M6 6l3-1-1-3 2-1.500 3 1-1 3.500 4 0 1 2-1.500 2-3 0 0 2.500 3-.5 2 1.500-1 3.500-3.500-1-1 3-2.500 0-1-4.500-3 3.500-2.500-1 0-3 2-2-3-.5 0-3 2.500-.5z" fill="#a81212" />
            <path d="M1 2l3.500-1 2 2.500-2 3-3.500-.5z" fill="#d9a0a0" stroke="#b83030" strokeWidth=".8" />
          </svg>
        </TaskButton>
        <Spacer />
        <Weather>
          <svg width="19" height="19" viewBox="0 0 19 19" aria-hidden="true">
            <circle cx="8" cy="11" r="7" fill="#f39a1e" /><path d="M8 17q-2-4 2-4 2-4 5-1 4 1 2 5z" fill="#dbe8f8" />
            <circle cx="13.500" cy="4.800" r="4.600" fill="#c42b1c" /><text x="11.700" y="7.800" fontSize="8" fill="#fff">1</text>
          </svg>
          <span>33°C</span>
          <span>晴れのちくもり</span>
        </Weather>
        <Tray>
          <IconButton $w={20} aria-label="hidden icons"><svg width="11" height="7" viewBox="0 0 11 7" fill="none" stroke={gray} aria-hidden="true"><path d="M1 6l4.500-4.500L10 6" /></svg></IconButton>
          <IconButton $w={20} aria-label="meet"><svg width="10" height="12" viewBox="0 0 10 12" fill="none" stroke={gray} aria-hidden="true"><path d="M1 1h6M1.500 3.500h5v5h-5zM6.500 5l3-1v4l-3-1M1 11h6" /></svg></IconButton>
          <IconButton $w={19} aria-label="sync"><svg width="15" height="13" viewBox="0 0 15 13" fill="none" stroke={gray} aria-hidden="true"><path d="M4 1.500l9-1v7M1.500 3.500v8h8M1.500 3.500l2.500-2M5 8l4-4M6 4h3v3" /><circle cx="11" cy="9.500" r="3" fill="#2a6fc0" stroke="none" /></svg></IconButton>
          <IconButton $w={19} aria-label="battery"><svg width="13" height="8" viewBox="0 0 13 8" aria-hidden="true"><path d="M.5.5h11v7h-11z" fill="none" stroke={gray} /><path d="M1 1h8v6h-8zM12 2.500h1v3h-1z" fill="#111" /></svg></IconButton>
          <IconButton $w={19} aria-label="network"><svg width="12" height="12" viewBox="0 0 12 12" fill="none" stroke={gray} aria-hidden="true"><path d="M1 11Q1 1 11 1M4 11q0-7 7-7M7 11q0-4 4-4" /><circle cx="10" cy="10" r="1" fill={gray} stroke="none" /></svg></IconButton>
          <IconButton $w={18} aria-label="volume"><svg width="13" height="11" viewBox="0 0 13 11" fill="none" stroke={gray} aria-hidden="true"><path d="M1 4h2l3-3v9l-3-3H1zM8 4q1 1.500 0 3M9.500 2.500q2 3 0 6M11.500 1q2 4 0 9" /></svg></IconButton>
          <IconButton $w={18} aria-label="input mode"><svg width="9" height="11" viewBox="0 0 9 11" fill="none" stroke="#999" aria-hidden="true"><path d="M1 10l3.500-9L8 10M2.500 6.500h4" /></svg></IconButton>
          <IconButton $w={28} aria-label="assistant"><svg width="13" height="13" viewBox="0 0 13 13" aria-hidden="true"><circle cx="6" cy="6" r="5.500" fill="#1a73d8" /><path d="M9 8h3l-1 4-2-1z" fill="#d83020" /><path d="M7 10h3v2h-3z" fill="#e8b020" /></svg></IconButton>
        </Tray>
        <Clock><span>10:49</span><span>2023/08/16</span></Clock>
        <Notices aria-label="notifications">
          <svg width="15" height="14" viewBox="0 0 15 14" aria-hidden="true"><path d="M1 1h12v9H8l-3 3v-3H1z" fill="#111" /><path d="M3 3.500h8M3 5.500h8M3 7.500h5" stroke="#eee" /></svg>
          <Badge>9</Badge>
        </Notices>
      </TaskBar>

      <Tip role="tooltip"><b>ペンツール</b>ペンツール (ベジエ曲線/直線を描く) (B)</Tip>
      <Pointer width="10" height="16" viewBox="0 0 10 16" aria-hidden="true">
        <path d="M.5.5v12l3-2.500 2 4.500 2-1-2-4.200h4z" fill="#fff" stroke="#222" strokeWidth=".7" />
      </Pointer>
    </Window>
  );
}
